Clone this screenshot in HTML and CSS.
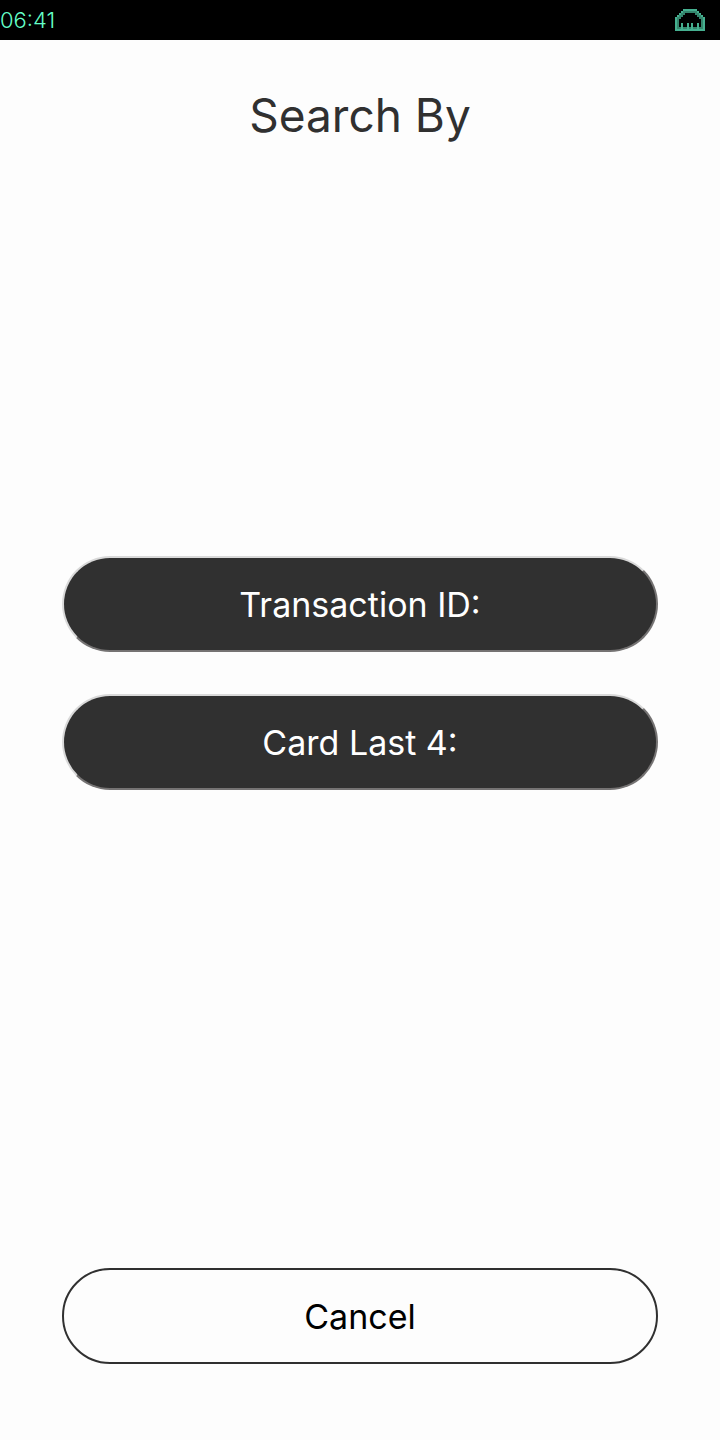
FILE: index.html
```html
<!DOCTYPE html>
<html lang="en">
<head>
  <meta charset="utf-8">
  <meta name="viewport" content="width=device-width, initial-scale=1">
  <title>Search By</title>
  <link rel="stylesheet" href="styles.css">
</head>
<body>
  <header class="status-bar">
    <time class="clock">06:41</time>
    <svg class="network-icon" viewBox="0 0 30 22" width="30" height="22" role="img" aria-label="Ethernet connected" shape-rendering="crispEdges">
      <path class="shade" d="M8 0H22V2H24V4H26V6H28V8H30V22H0V8H2V6H4V4H6V2H8Z M10 4V6H8V8H6V10H4V20H26V10H24V8H22V6H20V4Z" fill-rule="evenodd"/>
      <path d="M8 0H22V2H24V4H26V6H28V8H30V22H0V8H2V6H4V4H6V2H8Z M8 2V4H6V6H4V8H2V20H28V8H26V6H24V4H22V2Z" fill-rule="evenodd"/>
      <path class="shade" d="M4 18H6V20H4Z M8 18H12V20H8Z M14 18H16V20H14Z M18 18H22V20H18Z M24 18H26V20H24Z"/>
      <path d="M6 14H8V20H6Z M12 14H14V20H12Z M16 14H18V20H16Z M22 14H24V20H22Z"/>
    </svg>
  </header>

  <main class="screen">
    <h1>Search By</h1>

    <div class="options">
      <button type="button" class="btn btn-primary">Transaction ID:</button>
      <button type="button" class="btn btn-primary">Card Last 4:</button>
    </div>

    <button type="button" class="btn btn-cancel">Cancel</button>
  </main>
</body>
</html>
```

FILE: styles.css
```css
* {
  box-sizing: border-box;
}

body {
  margin: 0;
  min-height: 100vh;
  display: flex;
  flex-direction: column;
  font-family: Inter, "Liberation Sans", sans-serif;
  background: #fdfdfd;
  color: #303030;
}

.status-bar {
  display: flex;
  justify-content: space-between;
  align-items: center;
  height: 40px;
  padding-right: 15px;
  background: #000;
  color: #64ffc8;
}

.clock {
  font-size: 22px;
  font-weight: 300;
}

.network-icon {
  fill: #46b090;
}

.network-icon .shade {
  fill: #35866d;
}

.screen {
  flex: 1;
  display: flex;
  flex-direction: column;
  padding: 45px 62px 76px;
}

h1 {
  margin: 0;
  font-size: 46px;
  font-weight: 400;
  line-height: 60px;
  text-align: center;
}

.options {
  flex: 1;
  display: flex;
  flex-direction: column;
  justify-content: center;
  gap: 42px;
  padding-bottom: 67px;
}

.btn {
  width: 100%;
  height: 96px;
  padding: 0 20px;
  border-radius: 48px;
  font-family: inherit;
  font-size: 34px;
  font-weight: 400;
  cursor: pointer;
}

.btn-primary {
  background: #303030;
  color: #fff;
  border: 2px solid;
  border-color: #d9d9d9 #757373 #757373 #d9d9d9;
}

.btn-cancel {
  background: transparent;
  color: #000;
  border: 2px solid #303030;
}
```
